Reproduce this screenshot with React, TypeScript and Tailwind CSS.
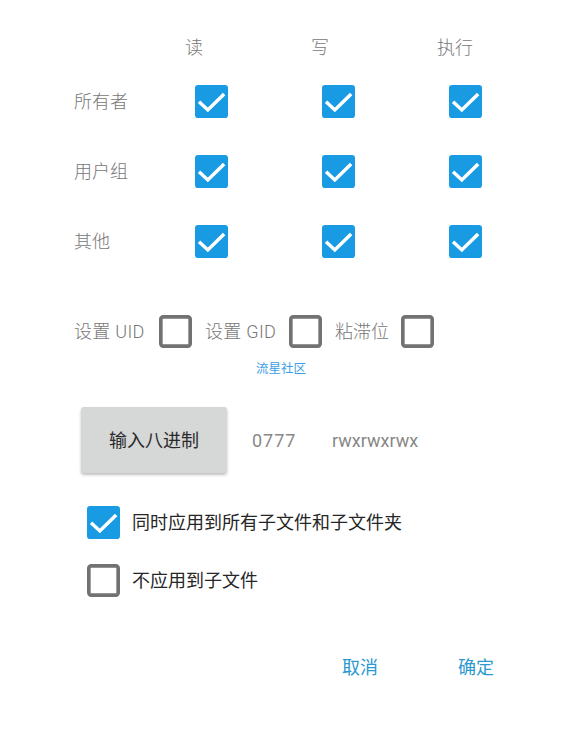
import React from "react";

const Checked = () => (
  <svg width="33" height="33" viewBox="3 3 18 18" className="block">
    <rect x="3" y="3" width="18" height="18" rx="1.7" fill="#189be2" />
    <path d="M5.2 12.1 L10 16.6 L18.9 7.9" fill="none" stroke="#fff" strokeWidth="1.9" />
  </svg>
);

const Unchecked = () => (
  <svg width="33" height="33" viewBox="3 3 18 18" className="block">
    <rect x="4" y="4" width="16" height="16" rx="1.3" fill="none" stroke="#727272" strokeWidth="2" />
  </svg>
);

export default function App() {
  const rows = ["所有者", "用户组", "其他"];
  return (
    <div
      className="w-[561px] h-[739px] bg-white flex flex-col pt-[29px]"
      style={{ fontFamily: '"Roboto","Noto Sans CJK SC",sans-serif' }}
    >
      <div className="pl-[74px] grid grid-cols-[74px_127px_127px_127px] h-[37px] items-center text-[18px] font-light text-[#777777]">
        <div />
        <div className="pl-[37px]">读</div>
        <div className="pl-[36px]">写</div>
        <div className="pl-[35px]">执行</div>
      </div>
      {rows.map((r) => (
        <div
          key={r}
          className="pl-[74px] grid grid-cols-[74px_127px_127px_127px] h-[70px] items-center text-[18px] font-light text-[#777777]"
        >
          <div className="whitespace-nowrap">{r}</div>
          <div className="flex justify-center"><Checked /></div>
          <div className="flex justify-center"><Checked /></div>
          <div className="flex justify-center"><Checked /></div>
        </div>
      ))}
      <div className="mt-[35px] h-[40px] pl-[74px] flex items-center text-[18px] font-light text-[#777777]">
        <span className="w-[71px] whitespace-nowrap tracking-[0.3px]">设置 UID</span>
        <span className="ml-[14px]"><Unchecked /></span>
        <span className="ml-[13px] w-[71px] whitespace-nowrap tracking-[0.3px]">设置 GID</span>
        <span className="ml-[13px]"><Unchecked /></span>
        <span className="ml-[13px] w-[54px] whitespace-nowrap">粘滞位</span>
        <span className="ml-[12px]"><Unchecked /></span>
      </div>
      <div className="mt-[11px] h-[14px] pl-[256px] text-[12.5px] leading-[14px] text-[#3a9de6]">流星社区</div>
      <div className="mt-[31px] pl-[81px] flex items-center text-[18px]">
        <button className="w-[146px] h-[66px] bg-[#d6d7d7] rounded-[3px] shadow-[0_2px_3px_rgba(0,0,0,0.25)] text-[#2a2a2a]">
          输入八进制
        </button>
        <span className="ml-[25px] w-[44px] whitespace-nowrap text-[#888888] tracking-[1px]">0777</span>
        <span className="ml-[36px] whitespace-nowrap text-[#888888]">rwxrwxrwx</span>
      </div>
      <div className="mt-[29px] h-[40px] pl-[87px] flex items-center text-[18px] text-[#262626]">
        <Checked />
        <span className="ml-[12px]">同时应用到所有子文件和子文件夹</span>
      </div>
      <div className="mt-[18px] h-[40px] pl-[87px] flex items-center text-[18px] text-[#262626]">
        <Unchecked />
        <span className="ml-[12px]">不应用到子文件</span>
      </div>
      <div className="mt-[47px] h-[40px] flex justify-end pr-[53px] gap-[52px] text-[18px] text-[#2b98cf]">
        <button className="w-[64px] h-[40px]">取消</button>
        <button className="w-[64px] h-[40px]">确定</button>
      </div>
    </div>
  );
}
